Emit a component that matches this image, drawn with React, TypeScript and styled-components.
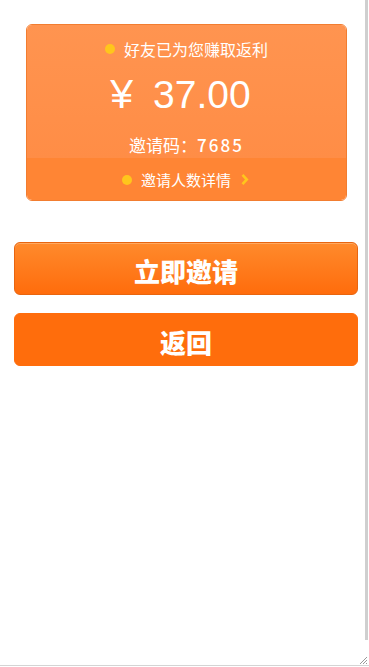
import React from "react";
import styled, { createGlobalStyle } from "styled-components";

const Global = createGlobalStyle`
  html, body { margin: 0; padding: 0; background: #fff; }
  body { font-family: "Liberation Sans", Arial, "Noto Sans CJK SC", sans-serif; overflow: hidden; }
`;

const Frame = styled.div`
  position: relative;
  width: 369px;
  height: 667px;
  overflow: hidden;
  background: #fff;
`;

const ScrollEdge = styled.div`
  position: absolute;
  top: 0;
  right: 1px;
  width: 3px;
  height: 640px;
  background: #cfcfcf;
`;

const BottomEdge = styled.div`
  position: absolute;
  left: 0;
  right: 0;
  bottom: 1px;
  height: 1px;
  background: #d4d4d4;
`;

const Grip = styled.svg`
  position: absolute;
  right: 1px;
  bottom: 2px;
  width: 9px;
  height: 9px;
`;

const Content = styled.div`
  display: flex;
  flex-direction: column;
  padding-top: 24px;
`;

const Card = styled.div`
  margin-left: 26px;
  width: 321px;
  height: 177px;
  box-sizing: border-box;
  border: 1px solid #f27d30;
  border-radius: 6px;
  overflow: hidden;
  display: flex;
  flex-direction: column;
  color: #fff;
`;

const CardTop = styled.div`
  height: 133px;
  background: linear-gradient(#ff9450, #ff8d46);
  display: flex;
  flex-direction: column;
  align-items: center;
`;

const CardBottom = styled.div`
  flex: 1;
  background: #ff8534;
  display: flex;
  align-items: center;
  justify-content: center;
  gap: 9px;
  padding-top: 1px;
  padding-right: 2px;
`;

const Dot = styled.span`
  width: 10px;
  height: 10px;
  border-radius: 50%;
  background: #ffc61c;
  display: inline-block;
`;

const LabelRow = styled.div`
  display: flex;
  align-items: center;
  gap: 9px;
  margin-top: 13px;
  height: 22px;
  font-size: 16px;
  font-family: "Noto Sans CJK SC", sans-serif;
`;

const Amount = styled.div`
  margin-top: 12px;
  margin-right: 12px;
  font-size: 39px;
  line-height: 44px;
  font-family: "Liberation Sans", Arial, sans-serif;
  display: flex;
  align-items: baseline;
`;

const Yen = styled.span`
  display: inline-block;
  font-size: 41px;
  margin-right: 20px;
`;

const Code = styled.div`
  margin-top: 16px;
  font-size: 17px;
  line-height: 24px;
  font-family: "Noto Sans CJK SC", sans-serif;
`;

const CodeNum = styled.span`
  letter-spacing: 2px;
  font-weight: 500;
`;

const DetailText = styled.span`
  font-size: 15px;
  font-family: "Noto Sans CJK SC", sans-serif;
`;

const Button = styled.button<{ $raised?: boolean }>`
  margin-left: 14px;
  width: 344px;
  height: 53px;
  box-sizing: border-box;
  border-radius: 6px;
  border: 1px solid ${(p) => (p.$raised ? "#e86510" : "#ff6d0c")};
  background: ${(p) =>
    p.$raised ? "linear-gradient(#ff8a2c, #ff6c0c)" : "#ff6d0c"};
  box-shadow: ${(p) => (p.$raised ? "inset 0 1px 0 rgba(255,200,150,0.5)" : "none")};
  color: #fff;
  font-size: 26px;
  font-weight: 900;
  font-family: "Noto Sans CJK SC", sans-serif;
  display: flex;
  align-items: center;
  justify-content: center;
  padding: 3px 0 0 0;
  cursor: pointer;
`;

const Buttons = styled.div`
  margin-top: 41px;
  display: flex;
  flex-direction: column;
  gap: 18px;
`;

export default function App() {
  return (
    <>
      <Global />
      <Frame>
        <Content>
          <Card>
            <CardTop>
              <LabelRow>
                <Dot />
                <span>好友已为您赚取返利</span>
              </LabelRow>
              <Amount>
                <Yen>¥</Yen>37.00
              </Amount>
              <Code>
                邀请码：<CodeNum>7685</CodeNum>
              </Code>
            </CardTop>
            <CardBottom>
              <Dot />
              <DetailText>邀请人数详情</DetailText>
              <svg width="9" height="13" viewBox="0 0 9 13">
                <path d="M2.5 1.8 L6.8 6.5 L2.5 11.2" fill="none" stroke="#ffc61c" strokeWidth="2.6" />
              </svg>
            </CardBottom>
          </Card>
          <Buttons>
            <Button $raised>立即邀请</Button>
            <Button>返回</Button>
          </Buttons>
        </Content>
        <ScrollEdge />
        <BottomEdge />
        <Grip viewBox="0 0 9 9">
          <path d="M8 1 L1 8 M8 4 L4 8 M8 7 L7 8" stroke="#999" strokeWidth="1" />
        </Grip>
      </Frame>
    </>
  );
}
